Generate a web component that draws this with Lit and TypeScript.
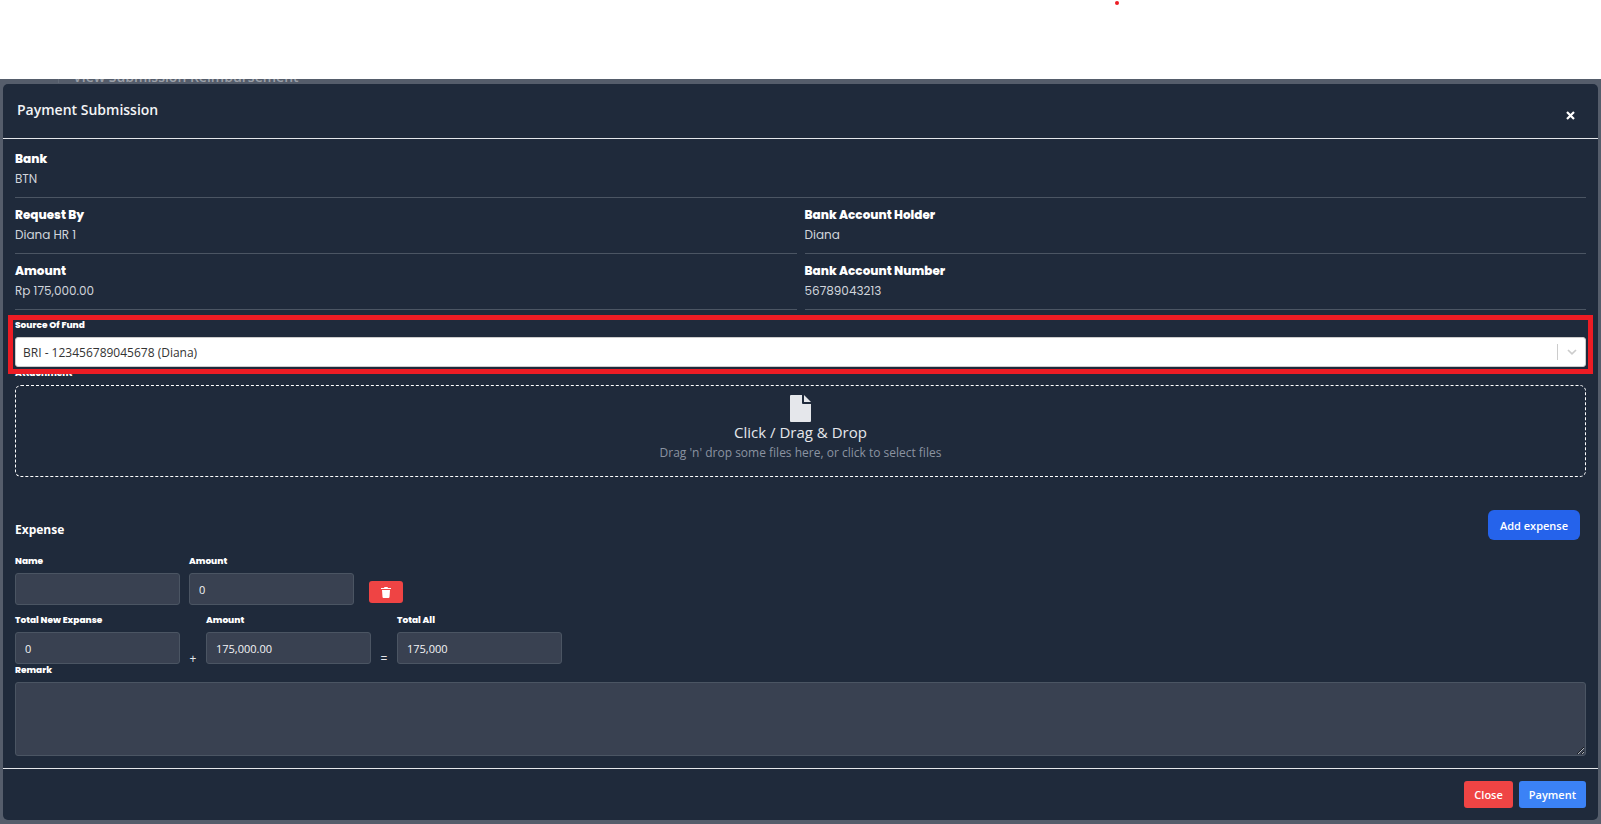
import { LitElement, html, css } from "lit";
import { customElement, property, state } from "lit/decorators.js";

@customElement("detail-item")
class DetailItem extends LitElement {
  @property() label = "";
  @property() value = "";

  static styles = css`
    :host {
      display: block;
      padding: 7px 0 8px;
      border-bottom: 1px solid #4b5563;
      font-family: Poppins, Inter, sans-serif;
      font-size: 12px;
      line-height: 20px;
    }
    .label {
      color: #fff;
      font-weight: 800;
    }
    .value {
      color: #d1d5db;
    }
  `;

  render() {
    return html`
      <div class="label">${this.label}</div>
      <div class="value">${this.value}</div>
    `;
  }
}

@customElement("app-root")
class AppRoot extends LitElement {
  @state() private details = [
    { label: "Request By", value: "Diana HR 1" },
    { label: "Bank Account Holder", value: "Diana" },
    { label: "Amount", value: "Rp 175,000.00" },
    { label: "Bank Account Number", value: "56789043213" },
  ];

  static styles = css`
    :host {
      display: flex;
      flex-direction: column;
      min-height: 100vh;
      background: #fff;
      font-family: "Segoe UI", "Open Sans", sans-serif;
      font-size: 12px;
      color: #e5e7eb;
    }
    * {
      box-sizing: border-box;
    }
    h1,
    h2,
    h3 {
      margin: 0;
    }
    button,
    input,
    select,
    textarea {
      font: inherit;
      margin: 0;
    }
    button {
      border: 0;
      padding: 0;
      color: #fff;
      cursor: pointer;
    }
    .top {
      position: relative;
      z-index: 1;
      height: 79px;
      background: #fff;
    }
    .dot {
      position: absolute;
      top: 1px;
      left: 1115px;
      width: 4px;
      height: 4px;
      border-radius: 50%;
      background: #ed1c24;
    }
    .backdrop {
      position: relative;
      flex: 1;
      padding: 5px 3px 4px;
      background: #555d6b;
    }
    .behind {
      position: absolute;
      top: 0;
      left: 58px;
      right: 0;
      height: 4px;
      display: flex;
      align-items: flex-end;
      padding-left: 14px;
      border-left: 1px solid #626a77;
    }
    .behind h1 {
      font-size: 14px;
      line-height: 12px;
      font-weight: 600;
      color: #9ba0a9;
    }
    .modal {
      position: relative;
      background: #1f2a3b;
      border-radius: 5px;
    }
    .head {
      display: flex;
      justify-content: space-between;
      align-items: flex-start;
      height: 55px;
      padding: 14px 20px 0 14px;
      border-bottom: 1px solid #e5e7eb;
    }
    .head h2 {
      font-size: 14px;
      line-height: 24px;
      font-weight: 600;
      color: #f3f4f6;
    }
    .x {
      display: flex;
      align-items: center;
      justify-content: center;
      width: 16px;
      height: 16px;
      margin-top: 9px;
      background: none;
    }
    .body {
      padding: 3px 12px 12px;
    }
    .grid {
      display: grid;
      grid-template-columns: 1fr 1fr;
      column-gap: 8px;
    }
    .lbl {
      display: block;
      font-family: Poppins, Inter, sans-serif;
      font-size: 9px;
      font-weight: 800;
      line-height: 12px;
      margin-bottom: 6px;
      color: #fff;
    }
    .fund {
      position: relative;
      margin-top: 9px;
    }
    .fund::after {
      content: "";
      position: absolute;
      inset: -4px -7px -7px;
      border: 5px solid #ed1c24;
      pointer-events: none;
    }
    .pick {
      display: grid;
      align-items: center;
    }
    .pick > * {
      grid-area: 1 / 1;
    }
    .pick select {
      appearance: none;
      width: 100%;
      height: 30px;
      padding: 0 44px 0 7px;
      border: 1px solid #ccc;
      border-radius: 3px;
      background: #fff;
      color: #333;
    }
    .arrow {
      justify-self: end;
      display: flex;
      align-items: center;
      gap: 9px;
      margin-right: 9px;
      pointer-events: none;
    }
    .bar {
      width: 1px;
      height: 16px;
      background: #ccc;
    }
    .drop {
      display: flex;
      flex-direction: column;
      align-items: center;
      height: 92px;
      padding-top: 9px;
      border: 1px dashed #fff;
      border-radius: 6px;
      cursor: pointer;
    }
    .drop input {
      display: none;
    }
    .drop strong {
      font-size: 15px;
      line-height: 20px;
      font-weight: 400;
    }
    .drop small {
      font-size: 12px;
      line-height: 22px;
      color: #8b93a1;
    }
    .exp {
      display: flex;
      justify-content: space-between;
      align-items: center;
      margin: 33px 6px 15px 0;
    }
    .exp h3 {
      font-size: 12px;
      line-height: 20px;
      padding-top: 10px;
      font-weight: 700;
      color: #fff;
    }
    .add {
      height: 30px;
      padding: 0 12px;
      border-radius: 6px;
      background: #2563eb;
      font-size: 11px;
      font-weight: 600;
    }
    .row {
      display: flex;
      align-items: flex-end;
      gap: 9px;
    }
    .row + .row {
      margin-top: 9px;
    }
    .field {
      width: 165px;
    }
    .field input,
    .remark {
      display: block;
      width: 100%;
      height: 32px;
      padding: 0 9px;
      border: 1px solid #4b5563;
      border-radius: 3px;
      background: #394151;
      color: #f3f4f6;
      font-size: 11px;
    }
    .remark {
      height: 74px;
      padding: 8px 9px;
    }
    .sign {
      width: 8px;
      font-size: 12px;
      line-height: 10px;
      text-align: center;
    }
    .trash {
      display: flex;
      align-items: center;
      justify-content: center;
      width: 34px;
      height: 22px;
      margin: 0 0 2px 6px;
      border-radius: 3px;
      background: #ef4444;
    }
    .foot {
      display: flex;
      justify-content: flex-end;
      gap: 6px;
      padding: 12px;
      border-top: 1px solid #e5e7eb;
    }
    .foot button {
      height: 27px;
      padding: 0 10px;
      border-radius: 3px;
      background: #3b82f6;
      font-size: 11px;
      font-weight: 600;
    }
    .foot .close {
      background: #ef4444;
    }
  `;

  private field(id: string, label: string, value: string) {
    return html`
      <div class="field">
        <label class="lbl" for=${id}>${label}</label>
        <input id=${id} type="text" .value=${value} />
      </div>
    `;
  }

  render() {
    return html`
      <div class="top"><span class="dot"></span></div>
      <div class="backdrop">
        <div class="behind"><h1>View Submission Reimbursement</h1></div>
        <section class="modal" role="dialog" aria-labelledby="title">
          <header class="head">
            <h2 id="title">Payment Submission</h2>
            <button class="x" aria-label="Dismiss">
              <svg width="9" height="9" viewBox="0 0 9 9">
                <path d="M1 1L8 8M8 1L1 8" stroke="#fff" stroke-width="2.2" />
              </svg>
            </button>
          </header>

          <div class="body">
            <detail-item label="Bank" value="BTN"></detail-item>
            <div class="grid">
              ${this.details.map(
                (d) => html`<detail-item label=${d.label} value=${d.value}></detail-item>`
              )}
            </div>

            <div class="fund">
              <label class="lbl" for="fund">Source Of Fund</label>
              <div class="pick">
                <select id="fund">
                  <option>BRI - 123456789045678 (Diana)</option>
                </select>
                <span class="arrow">
                  <span class="bar"></span>
                  <svg width="10" height="6" viewBox="0 0 10 6">
                    <path d="M1 1L5 4.8L9 1" fill="none" stroke="#ccc" stroke-width="1.7" />
                  </svg>
                </span>
              </div>
            </div>

            <label class="lbl" for="files">Attachment</label>
            <label class="drop">
              <input id="files" type="file" multiple />
              <svg width="21" height="27" viewBox="0 0 21 27">
                <path d="M1 0H12V8Q12 9 13 9H21V26Q21 27 20 27H1Q0 27 0 26V1Q0 0 1 0Z" fill="#e5e7eb" />
                <path d="M14 0L21 7H14Z" fill="#e5e7eb" />
              </svg>
              <strong>Click / Drag &amp; Drop</strong>
              <small>Drag 'n' drop some files here, or click to select files</small>
            </label>

            <div class="exp">
              <h3>Expense</h3>
              <button class="add">Add expense</button>
            </div>

            <div class="row">
              ${this.field("name", "Name", "")} ${this.field("amount", "Amount", "0")}
              <button class="trash" aria-label="Delete">
                <svg width="10" height="11" viewBox="0 0 10 11">
                  <path d="M0 1H3L3.5 0H6.5L7 1H10V2H0ZM1 3H9L8.5 10Q8.4 11 7.5 11H2.5Q1.6 11 1.5 10Z" fill="#fff" />
                </svg>
              </button>
            </div>
            <div class="row">
              ${this.field("total-new", "Total New Expanse", "0")}
              <span class="sign">+</span>
              ${this.field("base", "Amount", "175,000.00")}
              <span class="sign">=</span>
              ${this.field("total", "Total All", "175,000")}
            </div>

            <label class="lbl" for="remark">Remark</label>
            <textarea class="remark" id="remark"></textarea>
          </div>

          <footer class="foot">
            <button class="close">Close</button>
            <button>Payment</button>
          </footer>
        </section>
      </div>
    `;
  }
}
